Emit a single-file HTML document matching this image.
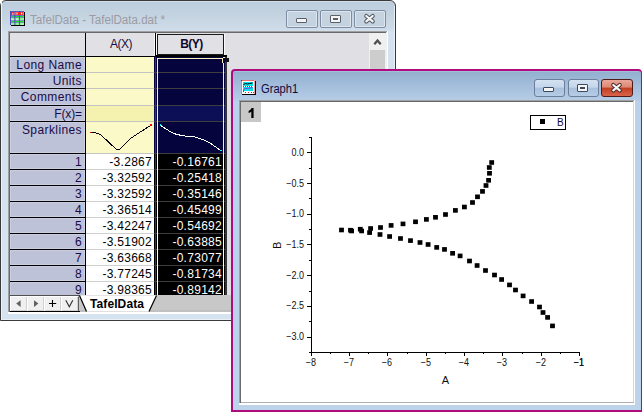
<!DOCTYPE html>
<html><head><meta charset="utf-8">
<style>
*{margin:0;padding:0;box-sizing:border-box}
html,body{width:642px;height:412px;overflow:hidden;background:#fff;font-family:"Liberation Sans",sans-serif;position:relative}
.a{position:absolute;white-space:pre}
</style></head><body>
<div class="a" style="left:0px;top:0px;width:396px;height:321px;background:linear-gradient(#e4ecf5 0px,#bccddd 1px,#c4d3e0 14px,#cfdcea 29px,#d4e2f0 31px,#d6e3f0 320px);border:1px solid #3a3a3a;border-radius:6px 6px 0 0"></div>
<svg class="a" style="left:9px;top:10px" width="18" height="18" viewBox="9 10 18 18">
<rect x="11" y="12" width="14" height="14" fill="#000"/>
<rect x="10" y="11" width="14" height="14" fill="#fff"/>
<g fill="#f22"><rect x="11" y="12" width="3.4" height="3"/><rect x="15.4" y="12" width="3.6" height="3"/><rect x="20" y="12" width="3.6" height="3"/></g>
<g fill="#fff"><rect x="12" y="13.5" width="1.5" height="1"/><rect x="16.5" y="12.5" width="1" height="2"/><rect x="21" y="12.6" width="1.2" height="1.8"/></g>
<g fill="#10e030"><rect x="11" y="15.8" width="12.8" height="1.6"/><rect x="11" y="21" width="12.8" height="1.5"/></g>
<g fill="#90f098"><rect x="11" y="18" width="12.8" height="2.4"/><rect x="11" y="23" width="12.8" height="2"/></g>
<g fill="#d8f8dc"><rect x="12" y="18.8" width="1.5" height="1"/><rect x="16" y="18.8" width="2" height="1"/><rect x="21" y="23.6" width="2" height="1"/></g>
<g fill="#5048b8"><rect x="10" y="11" width="14" height="0.9"/><rect x="10" y="15" width="14" height="0.8"/><rect x="10" y="17.4" width="14" height="0.6"/><rect x="10" y="20.4" width="14" height="0.6"/><rect x="10" y="22.5" width="14" height="0.5"/>
<rect x="10" y="11" width="1" height="14"/><rect x="14.4" y="11" width="1" height="14"/><rect x="19.1" y="11" width="0.9" height="14"/></g>
</svg>
<div class="a" style="left:30px;top:12px;font-size:12px;color:#9b9ba3;font-weight:400;transform:scaleX(0.965);transform-origin:0 0;line-height:16px">TafelData - TafelData.dat *</div>
<div class="a" style="left:286px;top:10px;width:32px;height:18px;background:linear-gradient(#c6d4e2,#c4d2df);border:1px solid #7d8ca4;border-radius:2px;box-shadow:inset 0 0 0 1px #dde6ef"></div>
<div class="a" style="left:320px;top:10px;width:32px;height:18px;background:linear-gradient(#c6d4e2,#c4d2df);border:1px solid #7d8ca4;border-radius:2px;box-shadow:inset 0 0 0 1px #dde6ef"></div>
<div class="a" style="left:354px;top:10px;width:32px;height:18px;background:linear-gradient(#c6d4e2,#c4d2df);border:1px solid #7d8ca4;border-radius:2px;box-shadow:inset 0 0 0 1px #dde6ef"></div>
<div class="a" style="left:296px;top:18px;width:11px;height:5px;background:#f4f4f4;border:1px solid #5a606a;border-radius:1px"></div>
<div class="a" style="left:330px;top:15px;width:11px;height:8px;background:#f4f4f4;border:1px solid #5a606a;border-radius:1px"></div>
<div class="a" style="left:333px;top:18px;width:5px;height:2px;background:#5a606a;"></div>
<svg class="a" style="left:363px;top:13px" width="14" height="12" viewBox="0 0 14 12"><path d="M3.3 3 L9.7 8.3 M9.7 3 L3.3 8.3" stroke="#50565f" stroke-width="4.2" stroke-linecap="round"/><path d="M3.3 3 L9.7 8.3 M9.7 3 L3.3 8.3" stroke="#f4f4f4" stroke-width="2.2" stroke-linecap="round"/></svg>
<div class="a" style="left:1px;top:1px;width:1px;height:319px;background:#eef3f9;"></div>
<div class="a" style="left:394px;top:6px;width:1px;height:314px;background:#e8eff7;"></div>
<div class="a" style="left:1px;top:319px;width:394px;height:1px;background:#e8eff7;"></div>
<div class="a" style="left:8px;top:31px;width:379px;height:1px;background:#a0a0a0;"></div>
<div class="a" style="left:8px;top:32px;width:378px;height:1px;background:#696969;"></div>
<div class="a" style="left:8px;top:31px;width:1px;height:281px;background:#a0a0a0;"></div>
<div class="a" style="left:9px;top:33px;width:1px;height:279px;background:#6b6b6b;"></div>
<div class="a" style="left:386px;top:33px;width:1px;height:279px;background:#f0f0f0;"></div>
<div class="a" style="left:387px;top:31px;width:1px;height:282px;background:#fff;"></div>
<div class="a" style="left:8px;top:312px;width:380px;height:2px;background:#fff;"></div>
<div class="a" style="left:10px;top:33px;width:376px;height:279px;background:#e0dfe3;"></div>
<div class="a" style="left:10px;top:33px;width:75px;height:23px;background:#e1e0e5;"></div>
<div class="a" style="left:86px;top:33px;width:69px;height:23px;background:#e1e0e5;"></div>
<div class="a" style="left:156px;top:33px;width:70px;height:22px;background:#e1e0e5;"></div>
<div class="a" style="left:21px;width:200px;text-align:center;top:37px;font-size:12px;color:#1a1040;font-weight:400;letter-spacing:-0.5px">A(X)</div>
<div class="a" style="left:157px;top:34px;width:67px;height:21px;background:transparent;border:1px solid #1a1a1a"></div>
<div class="a" style="left:156px;top:34px;width:1px;height:21px;background:#fafafa;"></div>
<div class="a" style="left:224px;top:34px;width:1px;height:21px;background:#fafafa;"></div>
<div class="a" style="left:91.5px;width:200px;text-align:center;top:37px;font-size:12px;color:#10082e;font-weight:700;letter-spacing:-0.5px">B(Y)</div>
<div class="a" style="left:10px;top:56px;width:146px;height:1px;background:#000;"></div>
<div class="a" style="left:155px;top:55px;width:72px;height:2px;background:#000;"></div>
<div class="a" style="left:85px;top:33px;width:1px;height:263px;background:#000;"></div>
<div class="a" style="left:155px;top:33px;width:1px;height:22px;background:#000;"></div>
<div class="a" style="left:154px;top:33px;width:1px;height:23px;background:#f8f8f8;"></div>
<div class="a" style="left:10px;top:57px;width:75px;height:15px;background:#bec2d8;box-shadow:inset 0 0 0 1px #cacee0"></div>
<div class="a" style="left:10px;top:72px;width:75px;height:1px;background:#000;"></div>
<div class="a" style="left:86px;top:57px;width:68px;height:15px;background:#fbf9c8;"></div>
<div class="a" style="left:86px;top:72px;width:68px;height:1px;background:#c4c4c4;"></div>
<div class="a" style="left:154px;top:57px;width:71px;height:15px;background:#05043c;"></div>
<div class="a" style="left:154px;top:72px;width:71px;height:1px;background:#3e3e3e;"></div>
<div class="a" style="left:8px;top:58px;font-size:12px;color:#180c48;font-weight:400;width:74px;text-align:right;letter-spacing:0.4px;line-height:15px;">Long Name</div>
<div class="a" style="left:10px;top:73px;width:75px;height:15px;background:#bec2d8;box-shadow:inset 0 0 0 1px #cacee0"></div>
<div class="a" style="left:10px;top:88px;width:75px;height:1px;background:#000;"></div>
<div class="a" style="left:86px;top:73px;width:68px;height:15px;background:#fbf9c8;"></div>
<div class="a" style="left:86px;top:88px;width:68px;height:1px;background:#c4c4c4;"></div>
<div class="a" style="left:154px;top:73px;width:71px;height:15px;background:#05043c;"></div>
<div class="a" style="left:154px;top:88px;width:71px;height:1px;background:#3e3e3e;"></div>
<div class="a" style="left:8px;top:74px;font-size:12px;color:#180c48;font-weight:400;width:74px;text-align:right;letter-spacing:0.4px;line-height:15px;">Units</div>
<div class="a" style="left:10px;top:89px;width:75px;height:16px;background:#bec2d8;box-shadow:inset 0 0 0 1px #cacee0"></div>
<div class="a" style="left:10px;top:105px;width:75px;height:1px;background:#000;"></div>
<div class="a" style="left:86px;top:89px;width:68px;height:16px;background:#fbf9c8;"></div>
<div class="a" style="left:86px;top:105px;width:68px;height:1px;background:#c4c4c4;"></div>
<div class="a" style="left:154px;top:89px;width:71px;height:16px;background:#05043c;"></div>
<div class="a" style="left:154px;top:105px;width:71px;height:1px;background:#3e3e3e;"></div>
<div class="a" style="left:8px;top:90px;font-size:12px;color:#180c48;font-weight:400;width:74px;text-align:right;letter-spacing:0.4px;line-height:15px;">Comments</div>
<div class="a" style="left:10px;top:106px;width:75px;height:15px;background:#bec2d8;box-shadow:inset 0 0 0 1px #cacee0"></div>
<div class="a" style="left:10px;top:121px;width:75px;height:1px;background:#000;"></div>
<div class="a" style="left:86px;top:106px;width:68px;height:15px;background:#f5f2b0;"></div>
<div class="a" style="left:86px;top:121px;width:68px;height:1px;background:#c4c4c4;"></div>
<div class="a" style="left:154px;top:106px;width:71px;height:15px;background:#0c0e56;"></div>
<div class="a" style="left:154px;top:121px;width:71px;height:1px;background:#3e3e3e;"></div>
<div class="a" style="left:8px;top:107px;font-size:12px;color:#180c48;font-weight:400;width:74px;text-align:right;line-height:15px;letter-spacing:-0.1px;">F(x)=</div>
<div class="a" style="left:10px;top:122px;width:75px;height:31px;background:#bec2d8;box-shadow:inset 0 0 0 1px #cacee0"></div>
<div class="a" style="left:10px;top:153px;width:75px;height:1px;background:#000;"></div>
<div class="a" style="left:86px;top:122px;width:68px;height:31px;background:#fbf9c8;"></div>
<div class="a" style="left:86px;top:153px;width:68px;height:1px;background:#c4c4c4;"></div>
<div class="a" style="left:154px;top:122px;width:71px;height:31px;background:#05043c;"></div>
<div class="a" style="left:154px;top:153px;width:71px;height:1px;background:#3e3e3e;"></div>
<div class="a" style="left:8px;top:123px;font-size:12px;color:#180c48;font-weight:400;width:74px;text-align:right;letter-spacing:0.4px;line-height:15px;">Sparklines</div>
<div class="a" style="left:10px;top:154px;width:75px;height:15px;background:#bec2d8;box-shadow:inset 0 0 0 1px #cacee0"></div>
<div class="a" style="left:86px;top:154px;width:68px;height:15px;background:#fff;"></div>
<div class="a" style="left:154px;top:154px;width:71px;height:15px;background:#000;"></div>
<div class="a" style="left:10px;top:169px;width:75px;height:1px;background:#000;"></div>
<div class="a" style="left:86px;top:169px;width:68px;height:1px;background:#d0d0d0;"></div>
<div class="a" style="left:154px;top:169px;width:71px;height:1px;background:#3c3c3c;"></div>
<div class="a" style="left:8px;top:155px;font-size:12px;color:#180c48;font-weight:400;width:74px;text-align:right;letter-spacing:0.4px;line-height:15px;">1</div>
<div class="a" style="left:86px;top:155px;font-size:12px;color:#000;font-weight:400;width:66px;text-align:right;letter-spacing:0.28px;line-height:15px;">-3.2867</div>
<div class="a" style="left:156px;top:155px;font-size:12px;color:#fff;font-weight:400;width:66px;text-align:right;letter-spacing:0.28px;line-height:15px;">-0.16761</div>
<div class="a" style="left:10px;top:170px;width:75px;height:15px;background:#bec2d8;box-shadow:inset 0 0 0 1px #cacee0"></div>
<div class="a" style="left:86px;top:170px;width:68px;height:15px;background:#fff;"></div>
<div class="a" style="left:154px;top:170px;width:71px;height:15px;background:#000;"></div>
<div class="a" style="left:10px;top:185px;width:75px;height:1px;background:#000;"></div>
<div class="a" style="left:86px;top:185px;width:68px;height:1px;background:#d0d0d0;"></div>
<div class="a" style="left:154px;top:185px;width:71px;height:1px;background:#3c3c3c;"></div>
<div class="a" style="left:8px;top:171px;font-size:12px;color:#180c48;font-weight:400;width:74px;text-align:right;letter-spacing:0.4px;line-height:15px;">2</div>
<div class="a" style="left:86px;top:171px;font-size:12px;color:#000;font-weight:400;width:66px;text-align:right;letter-spacing:0.28px;line-height:15px;">-3.32592</div>
<div class="a" style="left:156px;top:171px;font-size:12px;color:#fff;font-weight:400;width:66px;text-align:right;letter-spacing:0.28px;line-height:15px;">-0.25418</div>
<div class="a" style="left:10px;top:186px;width:75px;height:15px;background:#bec2d8;box-shadow:inset 0 0 0 1px #cacee0"></div>
<div class="a" style="left:86px;top:186px;width:68px;height:15px;background:#fff;"></div>
<div class="a" style="left:154px;top:186px;width:71px;height:15px;background:#000;"></div>
<div class="a" style="left:10px;top:201px;width:75px;height:1px;background:#000;"></div>
<div class="a" style="left:86px;top:201px;width:68px;height:1px;background:#d0d0d0;"></div>
<div class="a" style="left:154px;top:201px;width:71px;height:1px;background:#3c3c3c;"></div>
<div class="a" style="left:8px;top:187px;font-size:12px;color:#180c48;font-weight:400;width:74px;text-align:right;letter-spacing:0.4px;line-height:15px;">3</div>
<div class="a" style="left:86px;top:187px;font-size:12px;color:#000;font-weight:400;width:66px;text-align:right;letter-spacing:0.28px;line-height:15px;">-3.32592</div>
<div class="a" style="left:156px;top:187px;font-size:12px;color:#fff;font-weight:400;width:66px;text-align:right;letter-spacing:0.28px;line-height:15px;">-0.35146</div>
<div class="a" style="left:10px;top:202px;width:75px;height:15px;background:#bec2d8;box-shadow:inset 0 0 0 1px #cacee0"></div>
<div class="a" style="left:86px;top:202px;width:68px;height:15px;background:#fff;"></div>
<div class="a" style="left:154px;top:202px;width:71px;height:15px;background:#000;"></div>
<div class="a" style="left:10px;top:217px;width:75px;height:1px;background:#000;"></div>
<div class="a" style="left:86px;top:217px;width:68px;height:1px;background:#d0d0d0;"></div>
<div class="a" style="left:154px;top:217px;width:71px;height:1px;background:#3c3c3c;"></div>
<div class="a" style="left:8px;top:203px;font-size:12px;color:#180c48;font-weight:400;width:74px;text-align:right;letter-spacing:0.4px;line-height:15px;">4</div>
<div class="a" style="left:86px;top:203px;font-size:12px;color:#000;font-weight:400;width:66px;text-align:right;letter-spacing:0.28px;line-height:15px;">-3.36514</div>
<div class="a" style="left:156px;top:203px;font-size:12px;color:#fff;font-weight:400;width:66px;text-align:right;letter-spacing:0.28px;line-height:15px;">-0.45499</div>
<div class="a" style="left:10px;top:218px;width:75px;height:15px;background:#bec2d8;box-shadow:inset 0 0 0 1px #cacee0"></div>
<div class="a" style="left:86px;top:218px;width:68px;height:15px;background:#fff;"></div>
<div class="a" style="left:154px;top:218px;width:71px;height:15px;background:#000;"></div>
<div class="a" style="left:10px;top:233px;width:75px;height:1px;background:#000;"></div>
<div class="a" style="left:86px;top:233px;width:68px;height:1px;background:#d0d0d0;"></div>
<div class="a" style="left:154px;top:233px;width:71px;height:1px;background:#3c3c3c;"></div>
<div class="a" style="left:8px;top:219px;font-size:12px;color:#180c48;font-weight:400;width:74px;text-align:right;letter-spacing:0.4px;line-height:15px;">5</div>
<div class="a" style="left:86px;top:219px;font-size:12px;color:#000;font-weight:400;width:66px;text-align:right;letter-spacing:0.28px;line-height:15px;">-3.42247</div>
<div class="a" style="left:156px;top:219px;font-size:12px;color:#fff;font-weight:400;width:66px;text-align:right;letter-spacing:0.28px;line-height:15px;">-0.54692</div>
<div class="a" style="left:10px;top:234px;width:75px;height:15px;background:#bec2d8;box-shadow:inset 0 0 0 1px #cacee0"></div>
<div class="a" style="left:86px;top:234px;width:68px;height:15px;background:#fff;"></div>
<div class="a" style="left:154px;top:234px;width:71px;height:15px;background:#000;"></div>
<div class="a" style="left:10px;top:249px;width:75px;height:1px;background:#000;"></div>
<div class="a" style="left:86px;top:249px;width:68px;height:1px;background:#d0d0d0;"></div>
<div class="a" style="left:154px;top:249px;width:71px;height:1px;background:#3c3c3c;"></div>
<div class="a" style="left:8px;top:235px;font-size:12px;color:#180c48;font-weight:400;width:74px;text-align:right;letter-spacing:0.4px;line-height:15px;">6</div>
<div class="a" style="left:86px;top:235px;font-size:12px;color:#000;font-weight:400;width:66px;text-align:right;letter-spacing:0.28px;line-height:15px;">-3.51902</div>
<div class="a" style="left:156px;top:235px;font-size:12px;color:#fff;font-weight:400;width:66px;text-align:right;letter-spacing:0.28px;line-height:15px;">-0.63885</div>
<div class="a" style="left:10px;top:250px;width:75px;height:15px;background:#bec2d8;box-shadow:inset 0 0 0 1px #cacee0"></div>
<div class="a" style="left:86px;top:250px;width:68px;height:15px;background:#fff;"></div>
<div class="a" style="left:154px;top:250px;width:71px;height:15px;background:#000;"></div>
<div class="a" style="left:10px;top:265px;width:75px;height:1px;background:#000;"></div>
<div class="a" style="left:86px;top:265px;width:68px;height:1px;background:#d0d0d0;"></div>
<div class="a" style="left:154px;top:265px;width:71px;height:1px;background:#3c3c3c;"></div>
<div class="a" style="left:8px;top:251px;font-size:12px;color:#180c48;font-weight:400;width:74px;text-align:right;letter-spacing:0.4px;line-height:15px;">7</div>
<div class="a" style="left:86px;top:251px;font-size:12px;color:#000;font-weight:400;width:66px;text-align:right;letter-spacing:0.28px;line-height:15px;">-3.63668</div>
<div class="a" style="left:156px;top:251px;font-size:12px;color:#fff;font-weight:400;width:66px;text-align:right;letter-spacing:0.28px;line-height:15px;">-0.73077</div>
<div class="a" style="left:10px;top:266px;width:75px;height:15px;background:#bec2d8;box-shadow:inset 0 0 0 1px #cacee0"></div>
<div class="a" style="left:86px;top:266px;width:68px;height:15px;background:#fff;"></div>
<div class="a" style="left:154px;top:266px;width:71px;height:15px;background:#000;"></div>
<div class="a" style="left:10px;top:281px;width:75px;height:1px;background:#000;"></div>
<div class="a" style="left:86px;top:281px;width:68px;height:1px;background:#d0d0d0;"></div>
<div class="a" style="left:154px;top:281px;width:71px;height:1px;background:#3c3c3c;"></div>
<div class="a" style="left:8px;top:267px;font-size:12px;color:#180c48;font-weight:400;width:74px;text-align:right;letter-spacing:0.4px;line-height:15px;">8</div>
<div class="a" style="left:86px;top:267px;font-size:12px;color:#000;font-weight:400;width:66px;text-align:right;letter-spacing:0.28px;line-height:15px;">-3.77245</div>
<div class="a" style="left:156px;top:267px;font-size:12px;color:#fff;font-weight:400;width:66px;text-align:right;letter-spacing:0.28px;line-height:15px;">-0.81734</div>
<div class="a" style="left:10px;top:282px;width:75px;height:15px;background:#bec2d8;box-shadow:inset 0 0 0 1px #cacee0"></div>
<div class="a" style="left:86px;top:282px;width:68px;height:14px;background:#fff;"></div>
<div class="a" style="left:154px;top:282px;width:71px;height:14px;background:#000;"></div>
<div class="a" style="left:8px;top:283px;font-size:12px;color:#180c48;font-weight:400;width:74px;text-align:right;letter-spacing:0.4px;line-height:15px;">9</div>
<div class="a" style="left:86px;top:283px;font-size:12px;color:#000;font-weight:400;width:66px;text-align:right;letter-spacing:0.28px;line-height:15px;">-3.98365</div>
<div class="a" style="left:156px;top:283px;font-size:12px;color:#fff;font-weight:400;width:66px;text-align:right;letter-spacing:0.28px;line-height:15px;">-0.89142</div>
<div class="a" style="left:155px;top:57px;width:1px;height:239px;background:#3c3c3c;"></div>
<div class="a" style="left:157px;top:58px;width:1px;height:96px;background:#f8f0b8;"></div>
<div class="a" style="left:157px;top:154px;width:1px;height:142px;background:#fff;"></div>
<div class="a" style="left:157px;top:58px;width:65px;height:1px;background:#f8f0b8;"></div>
<div class="a" style="left:222px;top:58px;width:1px;height:5px;background:#f8f0b8;"></div>
<div class="a" style="left:223px;top:63px;width:1px;height:91px;background:#f8f0b8;"></div>
<div class="a" style="left:223px;top:154px;width:1px;height:142px;background:#fff;"></div>
<div class="a" style="left:225px;top:57px;width:2px;height:239px;background:#363636;"></div>
<div class="a" style="left:223px;top:57px;width:2px;height:1px;background:#f8f0b8;"></div>
<div class="a" style="left:225px;top:58px;width:4px;height:4px;background:#101010;"></div>
<svg class="a" style="left:86px;top:122px" width="69" height="31" viewBox="86 122 69 31" shape-rendering="crispEdges"><polyline points="91,132.5 94.5,132.5 97.5,133.5 100.5,134.5 116.5,149.5 119.5,149.5 126.5,142.5 130.5,138.5 149.5,126" fill="none" stroke="#000" stroke-width="1"/><rect x="90" y="132" width="1" height="1" fill="#f00"/><rect x="150" y="124" width="2" height="2" fill="#f00"/></svg>
<svg class="a" style="left:156px;top:122px" width="69" height="31" viewBox="156 122 69 31" shape-rendering="crispEdges"><polyline points="161,125.5 163.5,127.5 167,129.5 170,131.5 174,133.5 177,134.5 182,135.5 188.5,136.5 193.5,136.5 199.5,138.5 205,140.5 209.5,142.5 212,144.5 218,148.5 220,150" fill="none" stroke="#fff" stroke-width="1"/><rect x="160" y="124" width="1" height="2" fill="#0ff"/><rect x="220" y="150" width="2" height="1" fill="#0ff"/></svg>
<div class="a" style="left:369px;top:33px;width:17px;height:262px;background:#f0f0f0;"></div>
<div class="a" style="left:370px;top:50px;width:15px;height:245px;background:#cdcdcd;"></div>
<svg class="a" style="left:372px;top:37px" width="11" height="9" viewBox="0 0 11 9"><path d="M2.3 7.3 L5.5 3.6 L8.7 7.3" fill="none" stroke="#505050" stroke-width="2.3"/></svg>
<div class="a" style="left:10px;top:295px;width:376px;height:17px;background:#c8c8c8;"></div>
<div class="a" style="left:10px;top:310px;width:376px;height:2px;background:#c0c0c0;"></div>
<div class="a" style="left:10px;top:295px;width:70px;height:1px;background:#505050;"></div>
<div class="a" style="left:10px;top:296px;width:18px;height:15px;background:#f0f0f0;border-right:1px solid #606060;border-left:1px solid #fff;border-top:1px solid #fff;box-shadow:inset -1px -1px 0 #d0d0d0"></div>
<div class="a" style="left:27px;top:296px;width:18px;height:15px;background:#f0f0f0;border-right:1px solid #606060;border-left:1px solid #fff;border-top:1px solid #fff;box-shadow:inset -1px -1px 0 #d0d0d0"></div>
<div class="a" style="left:44px;top:296px;width:18px;height:15px;background:#f0f0f0;border-right:1px solid #606060;border-left:1px solid #fff;border-top:1px solid #fff;box-shadow:inset -1px -1px 0 #d0d0d0"></div>
<div class="a" style="left:61px;top:296px;width:18px;height:15px;background:#f0f0f0;border-right:1px solid #606060;border-left:1px solid #fff;border-top:1px solid #fff;box-shadow:inset -1px -1px 0 #d0d0d0"></div>
<div class="a" style="left:10px;top:311px;width:70px;height:1px;background:#000;"></div>
<svg class="a" style="left:10px;top:296px" width="70" height="15" viewBox="0 0 70 15"><path d="M10.6 4.3 L6.2 7.6 L10.6 10.9 Z" fill="#606060"/><path d="M24 4.3 L28.4 7.6 L24 10.9 Z" fill="#606060"/><path d="M42.5 4 V11 M39 7.5 H46.2" stroke="#000" stroke-width="1.1"/><path d="M55.8 4.3 L59.3 10.8 L62.8 4.3" fill="none" stroke="#333" stroke-width="1.15"/></svg>
<svg class="a" style="left:78px;top:295px" width="82" height="18" viewBox="78 295 82 18"><path d="M79.5 295.5 L86.5 311.5 L149 311.5 L156.5 295.5 Z" fill="#fff"/><path d="M79.5 295.5 L86.5 311.5 M149 311.5 L156.5 295.5" stroke="#000" stroke-width="1.2" fill="none"/></svg>
<div class="a" style="left:90px;top:297px;font-size:12px;color:#000;font-weight:700;line-height:15px;letter-spacing:0.1px">TafelData</div>
<div class="a" style="left:231px;top:69px;width:411px;height:343px;background:linear-gradient(#b6cce2 0px,#93b0d0 1px,#a3bddb 14px,#b5cce6 29px,#b9d1ea 31px,#bcd3ea 343px);border:2px solid #ae0b7e;border-right-width:1px;border-radius:4px 4px 0 0"></div>
<svg class="a" style="left:241px;top:80px" width="16" height="16" viewBox="0 0 16 16" shape-rendering="crispEdges">
<rect x="1" y="1" width="14" height="14" fill="#000"/>
<rect x="0" y="0" width="14" height="14" fill="#fff"/>
<rect x="0" y="0" width="14" height="1" fill="#e87070"/><rect x="0" y="0" width="1" height="14" fill="#e88080"/><rect x="13" y="0" width="1" height="14" fill="#e8a0a0"/>
<rect x="0" y="0" width="1" height="1" fill="#404040"/>
<rect x="2" y="2" width="10" height="4" fill="#00e4ee"/>
<rect x="2" y="7" width="10" height="4" fill="#00e4ee"/>
<path d="M2.5 4.5 L4.5 3.5 L6.5 4 L8.5 3.5 L11.5 3" stroke="#000" stroke-width="1" fill="none" shape-rendering="auto"/>
<path d="M2.5 9.5 L4.5 8.5 L7.5 8.3 L11.5 7.6" stroke="#8040e0" stroke-width="1" fill="none" shape-rendering="auto"/>
<g fill="#e02020"><rect x="2" y="6" width="1" height="1"/><rect x="4" y="6" width="1" height="1"/><rect x="6" y="6" width="1" height="1"/><rect x="8" y="6" width="1" height="1"/><rect x="10" y="6" width="1" height="1"/>
<rect x="2" y="10" width="1" height="2"/><rect x="4" y="12" width="1" height="1"/><rect x="7" y="12" width="1" height="1"/><rect x="10" y="12" width="1" height="1"/><rect x="12" y="12" width="1" height="1"/></g>
</svg>
<div class="a" style="left:261px;top:81px;font-size:12px;color:#14083a;font-weight:400;transform:scaleX(0.93);transform-origin:0 0;line-height:16px">Graph1</div>
<div class="a" style="left:534px;top:79px;width:31px;height:18px;background:linear-gradient(#d4e2f1 0,#c4d6eb 45%,#a9c1de 50%,#b6cce6 100%);border:1px solid #6b7e9a;border-radius:3px"></div>
<div class="a" style="left:568px;top:79px;width:31px;height:18px;background:linear-gradient(#d4e2f1 0,#c4d6eb 45%,#a9c1de 50%,#b6cce6 100%);border:1px solid #6b7e9a;border-radius:3px"></div>
<div class="a" style="left:601px;top:79px;width:32px;height:18px;background:linear-gradient(#eaa898 0,#dc8772 45%,#c23e22 50%,#d8644a 100%);border:1px solid #4e1a1a;border-radius:3px"></div>
<div class="a" style="left:543px;top:87px;width:11px;height:5px;background:#f6f6f6;border:1px solid #3a4a60;border-radius:1px"></div>
<div class="a" style="left:577px;top:84px;width:11px;height:8px;background:#f6f6f6;border:1px solid #3a4a60;border-radius:1px"></div>
<div class="a" style="left:580px;top:87px;width:5px;height:2px;background:#3a4a60;"></div>
<svg class="a" style="left:610px;top:82px" width="14" height="12" viewBox="0 0 14 12"><path d="M3.3 3 L9.7 8.3 M9.7 3 L3.3 8.3" stroke="#4a2a2a" stroke-width="4.2" stroke-linecap="round"/><path d="M3.3 3 L9.7 8.3 M9.7 3 L3.3 8.3" stroke="#f6f6f6" stroke-width="2.2" stroke-linecap="round"/></svg>
<div class="a" style="left:239px;top:100px;width:395px;height:1px;background:#a0a0a0;"></div>
<div class="a" style="left:239px;top:101px;width:394px;height:1px;background:#696969;"></div>
<div class="a" style="left:239px;top:100px;width:1px;height:303px;background:#a0a0a0;"></div>
<div class="a" style="left:240px;top:102px;width:1px;height:301px;background:#6b6b6b;"></div>
<div class="a" style="left:633px;top:102px;width:1px;height:301px;background:#d8d8d8;"></div>
<div class="a" style="left:634px;top:100px;width:1px;height:304px;background:#fff;"></div>
<div class="a" style="left:241px;top:402px;width:393px;height:1px;background:#b0b0b0;"></div>
<div class="a" style="left:239px;top:403px;width:396px;height:2px;background:#fff;"></div>
<div class="a" style="left:241px;top:102px;width:392px;height:300px;background:#fff;"></div>
<div class="a" style="left:241px;top:102px;width:20px;height:20px;background:#c8c8c8;"></div>
<svg class="a" style="left:0;top:0" width="642" height="412" viewBox="0 0 642 412"><path d="M251.3 108 L253.6 108 L253.6 118 L251.3 118 L251.3 111.6 Q250.2 112.6 248.6 113.1 L248.6 111 Q250.6 110.2 251.6 108 Z" fill="#000"/></svg>
<svg class="a" style="left:0;top:0" width="642" height="412" viewBox="0 0 642 412" shape-rendering="crispEdges"><rect x="311" y="137" width="1" height="216"/><rect x="311" y="352" width="269" height="1"/><rect x="309" y="137" width="2" height="1"/><rect x="309" y="352" width="2" height="1"/><rect x="311" y="352" width="1" height="4"/><rect x="330" y="352" width="1" height="2"/><rect x="349" y="352" width="1" height="4"/><rect x="368" y="352" width="1" height="2"/><rect x="387" y="352" width="1" height="4"/><rect x="407" y="352" width="1" height="2"/><rect x="426" y="352" width="1" height="4"/><rect x="445" y="352" width="1" height="2"/><rect x="464" y="352" width="1" height="4"/><rect x="483" y="352" width="1" height="2"/><rect x="502" y="352" width="1" height="4"/><rect x="522" y="352" width="1" height="2"/><rect x="541" y="352" width="1" height="4"/><rect x="560" y="352" width="1" height="2"/><rect x="579" y="352" width="1" height="4"/><rect x="307" y="152" width="4" height="1"/><rect x="309" y="168" width="2" height="1"/><rect x="307" y="183" width="4" height="1"/><rect x="309" y="198" width="2" height="1"/><rect x="307" y="214" width="4" height="1"/><rect x="309" y="229" width="2" height="1"/><rect x="307" y="244" width="4" height="1"/><rect x="309" y="260" width="2" height="1"/><rect x="307" y="275" width="4" height="1"/><rect x="309" y="291" width="2" height="1"/><rect x="307" y="306" width="4" height="1"/><rect x="309" y="321" width="2" height="1"/><rect x="307" y="337" width="4" height="1"/></svg>
<svg class="a" style="left:0;top:0" width="642" height="412" viewBox="0 0 642 412"><rect x="489.3" y="160.2" width="4.8" height="4.6"/><rect x="486.9" y="165.2" width="4.8" height="4.6"/><rect x="487.1" y="171.0" width="4.8" height="4.6"/><rect x="486.2" y="178.0" width="4.8" height="4.6"/><rect x="483.6" y="183.2" width="4.8" height="4.6"/><rect x="480.1" y="189.1" width="4.8" height="4.6"/><rect x="475.1" y="194.5" width="4.8" height="4.6"/><rect x="470.1" y="200.2" width="4.8" height="4.6"/><rect x="462.0" y="204.7" width="4.8" height="4.6"/><rect x="453.0" y="208.1" width="4.8" height="4.6"/><rect x="443.1" y="212.2" width="4.8" height="4.6"/><rect x="433.1" y="215.0" width="4.8" height="4.6"/><rect x="424.0" y="217.1" width="4.8" height="4.6"/><rect x="413.1" y="219.5" width="4.8" height="4.6"/><rect x="400.6" y="221.6" width="4.8" height="4.6"/><rect x="388.7" y="223.1" width="4.8" height="4.6"/><rect x="378.1" y="225.2" width="4.8" height="4.6"/><rect x="368.2" y="226.2" width="4.8" height="4.6"/><rect x="357.9" y="226.9" width="4.8" height="4.6"/><rect x="348.1" y="227.9" width="4.8" height="4.6"/><rect x="339.1" y="227.7" width="4.8" height="4.6"/><rect x="349.2" y="228.7" width="4.8" height="4.6"/><rect x="359.2" y="228.7" width="4.8" height="4.6"/><rect x="367.2" y="230.3" width="4.8" height="4.6"/><rect x="377.6" y="232.2" width="4.8" height="4.6"/><rect x="387.2" y="234.2" width="4.8" height="4.6"/><rect x="398.1" y="236.2" width="4.8" height="4.6"/><rect x="408.1" y="238.3" width="4.8" height="4.6"/><rect x="417.6" y="240.2" width="4.8" height="4.6"/><rect x="425.7" y="242.2" width="4.8" height="4.6"/><rect x="434.3" y="245.1" width="4.8" height="4.6"/><rect x="442.1" y="247.1" width="4.8" height="4.6"/><rect x="450.2" y="251.0" width="4.8" height="4.6"/><rect x="457.7" y="253.6" width="4.8" height="4.6"/><rect x="467.1" y="258.7" width="4.8" height="4.6"/><rect x="474.7" y="263.2" width="4.8" height="4.6"/><rect x="483.1" y="268.2" width="4.8" height="4.6"/><rect x="492.1" y="272.7" width="4.8" height="4.6"/><rect x="499.2" y="277.2" width="4.8" height="4.6"/><rect x="507.1" y="282.6" width="4.8" height="4.6"/><rect x="513.1" y="287.7" width="4.8" height="4.6"/><rect x="520.7" y="293.6" width="4.8" height="4.6"/><rect x="529.2" y="299.2" width="4.8" height="4.6"/><rect x="537.1" y="304.7" width="4.8" height="4.6"/><rect x="540.6" y="310.2" width="4.8" height="4.6"/><rect x="545.2" y="315.1" width="4.8" height="4.6"/><rect x="550.1" y="323.6" width="4.8" height="4.6"/><rect x="530.5" y="115.5" width="35" height="14" fill="none" stroke="#000" stroke-width="1" shape-rendering="crispEdges"/><rect x="540" y="119" width="5" height="5" shape-rendering="crispEdges"/></svg>
<div class="a" style="left:557px;top:117px;font-size:10px;color:#10082e;font-weight:400;line-height:11px">B</div>
<div class="a" style="left:260.60px;width:100px;text-align:center;top:358px;font-size:10px;line-height:10px;color:#111;transform:scaleX(0.9);transform-origin:50% 0">&#8722;8</div>
<div class="a" style="left:298.94px;width:100px;text-align:center;top:358px;font-size:10px;line-height:10px;color:#111;transform:scaleX(0.9);transform-origin:50% 0">&#8722;7</div>
<div class="a" style="left:337.28px;width:100px;text-align:center;top:358px;font-size:10px;line-height:10px;color:#111;transform:scaleX(0.9);transform-origin:50% 0">&#8722;6</div>
<div class="a" style="left:375.62px;width:100px;text-align:center;top:358px;font-size:10px;line-height:10px;color:#111;transform:scaleX(0.9);transform-origin:50% 0">&#8722;5</div>
<div class="a" style="left:413.96px;width:100px;text-align:center;top:358px;font-size:10px;line-height:10px;color:#111;transform:scaleX(0.9);transform-origin:50% 0">&#8722;4</div>
<div class="a" style="left:452.30px;width:100px;text-align:center;top:358px;font-size:10px;line-height:10px;color:#111;transform:scaleX(0.9);transform-origin:50% 0">&#8722;3</div>
<div class="a" style="left:490.64px;width:100px;text-align:center;top:358px;font-size:10px;line-height:10px;color:#111;transform:scaleX(0.9);transform-origin:50% 0">&#8722;2</div>
<div class="a" style="left:528.98px;width:100px;text-align:center;top:358px;font-size:10px;line-height:10px;color:#111;transform:scaleX(0.9);transform-origin:50% 0">&#8722;1</div>
<div class="a" style="left:528.98px;width:100px;text-align:center;top:358px;font-size:10px;line-height:10px;color:#111;transform:scaleX(0.9);transform-origin:50% 0">&#8722;1</div>
<div class="a" style="left:203.8px;width:100px;text-align:right;top:148.0px;font-size:10px;line-height:10px;color:#111;transform:scaleX(0.9);transform-origin:100% 0">0.0</div>
<div class="a" style="left:203.8px;width:100px;text-align:right;top:178.68px;font-size:10px;line-height:10px;color:#111;transform:scaleX(0.9);transform-origin:100% 0">&#8722;0.5</div>
<div class="a" style="left:203.8px;width:100px;text-align:right;top:209.36px;font-size:10px;line-height:10px;color:#111;transform:scaleX(0.9);transform-origin:100% 0">&#8722;1.0</div>
<div class="a" style="left:203.8px;width:100px;text-align:right;top:240.04px;font-size:10px;line-height:10px;color:#111;transform:scaleX(0.9);transform-origin:100% 0">&#8722;1.5</div>
<div class="a" style="left:203.8px;width:100px;text-align:right;top:270.72px;font-size:10px;line-height:10px;color:#111;transform:scaleX(0.9);transform-origin:100% 0">&#8722;2.0</div>
<div class="a" style="left:203.8px;width:100px;text-align:right;top:301.4px;font-size:10px;line-height:10px;color:#111;transform:scaleX(0.9);transform-origin:100% 0">&#8722;2.5</div>
<div class="a" style="left:203.8px;width:100px;text-align:right;top:332.08px;font-size:10px;line-height:10px;color:#111;transform:scaleX(0.9);transform-origin:100% 0">&#8722;3.0</div>
<div class="a" style="left:345.5px;width:200px;text-align:center;top:374px;font-size:11px;color:#111;font-weight:400;line-height:12px">A</div>
<div class="a" style="left:271px;top:237px;font-size:11px;color:#111;font-weight:400;line-height:12px;transform:rotate(-90deg);transform-origin:6px 6px">B</div>
</body></html>
